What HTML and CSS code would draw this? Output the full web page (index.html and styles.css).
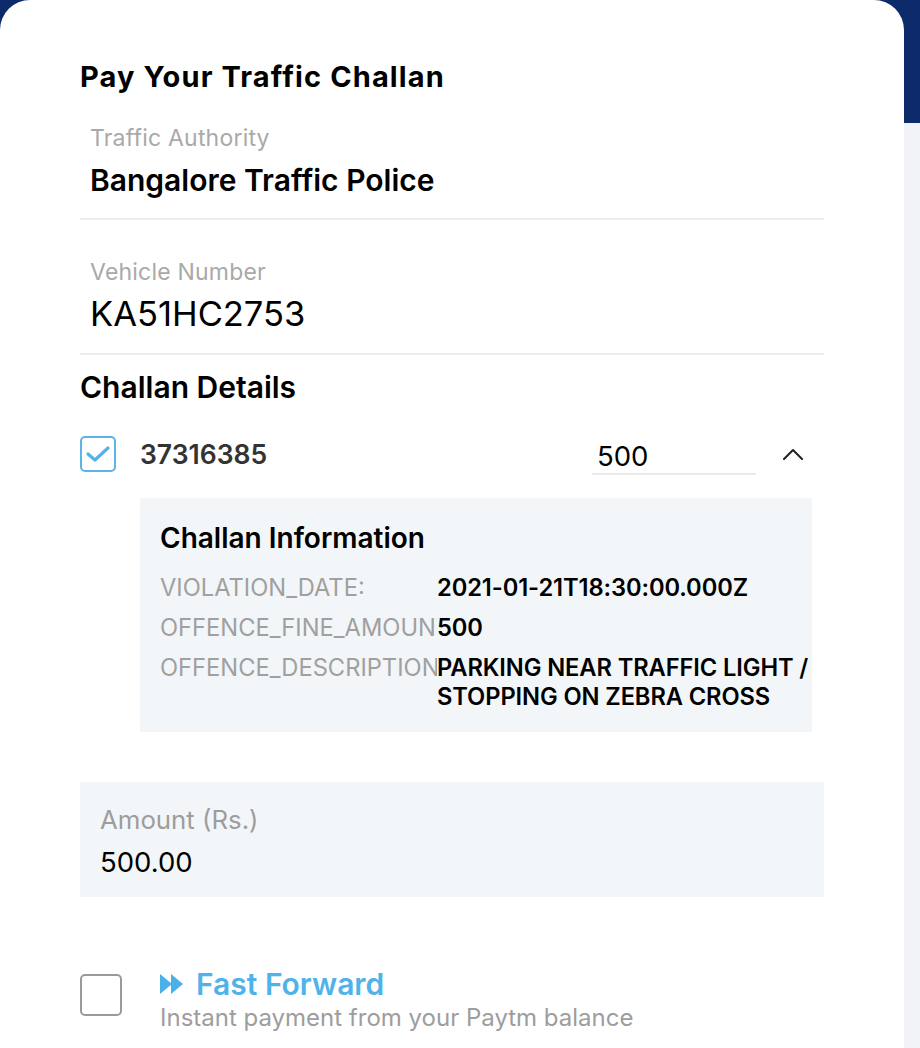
FILE: index.html
```html
<!DOCTYPE html>
<html lang="en">
<head>
  <meta charset="UTF-8">
  <title>Pay Your Traffic Challan</title>
  <link rel="stylesheet" href="styles.css">
</head>
<body>

<div class="card">
  <h1 class="title">Pay Your Traffic Challan</h1>

  <div class="field first">
    <div class="field-label">Traffic Authority</div>
    <div class="field-value bold">Bangalore Traffic Police</div>
  </div>

  <div class="field">
    <div class="field-label">Vehicle Number</div>
    <div class="field-value big">KA51HC2753</div>
  </div>

  <h2 class="section">Challan Details</h2>

  <div class="challan-row">
    <span class="check checked">
      <svg width="26" height="20" viewBox="0 0 26 20"><polyline points="3,10 10,16 23,4" fill="none" stroke="#55b2e6" stroke-width="3.2" stroke-linecap="round" stroke-linejoin="round"/></svg>
    </span>
    <span class="challan-no">37316385</span>
    <span class="challan-amt">500</span>
    <span class="chevron">
      <svg width="22" height="12" viewBox="0 0 22 12"><polyline points="2,11 11,2 20,11" fill="none" stroke="#222" stroke-width="2" stroke-linecap="round" stroke-linejoin="round"/></svg>
    </span>
  </div>

  <div class="info">
    <h3 class="info-title">Challan Information</h3>
    <div class="info-grid">
      <div class="info-key">VIOLATION_DATE:</div>
      <div class="info-val">2021-01-21T18:30:00.000Z</div>
      <div class="info-key">OFFENCE_FINE_AMOUNT:</div>
      <div class="info-val">500</div>
      <div class="info-key">OFFENCE_DESCRIPTION:</div>
      <div class="info-val">PARKING NEAR TRAFFIC LIGHT /<br>STOPPING ON ZEBRA CROSS</div>
    </div>
  </div>

  <div class="amount">
    <div class="amount-label">Amount (Rs.)</div>
    <div class="amount-value">500.00</div>
  </div>

  <div class="ff-row">
    <span class="check"></span>
    <div class="ff-text">
      <div class="ff-title">
        <svg width="24" height="20" viewBox="0 0 24 20"><polygon points="0,0 12,10 0,20" fill="#4bafe8"/><polygon points="11,0 23,10 11,20" fill="#4bafe8"/></svg>
        Fast Forward
      </div>
      <div class="ff-sub">Instant payment from your Paytm balance</div>
    </div>
  </div>
</div>

</body>
</html>
```

FILE: styles.css
```css
body {
  margin: 0;
  padding: 0;
  font-family: 'Inter', 'Liberation Sans', sans-serif;
  background: linear-gradient(#0d2a6a 0, #0d2a6a 123px, #f2f3f8 123px);
  min-height: 1048px;
  overflow: hidden;
}
.card {
  width: 904px;
  min-height: 1100px;
  box-sizing: border-box;
  background: #fff;
  border-radius: 30px 30px 0 0;
  padding: 60px 80px 0 80px;
}
.title {
  margin: 0;
  font-size: 29px;
  line-height: 34px;
  font-weight: 700;
  color: #000;
  letter-spacing: 1.1px;
}
.field {
  padding: 40px 10px 20px 10px;
  border-bottom: 2px solid #ececec;
}
.field.first {
  padding-top: 32px;
}
.field-label {
  font-size: 23px;
  line-height: 24px;
  color: #a9a9a9;
  letter-spacing: 0.2px;
}
.field-value {
  margin-top: 12px;
  color: #000;
}
.field-value.bold {
  margin-top: 12px;
  font-size: 30px;
  line-height: 36px;
  font-weight: 600;
}
.field-value.big {
  margin-top: 11px;
  font-size: 34.5px;
  line-height: 38px;
}
.section {
  margin: 16px 0 0 0;
  font-size: 30px;
  line-height: 32px;
  font-weight: 600;
  color: #000;
}
.challan-row {
  display: flex;
  align-items: center;
  margin-top: 32px;
  height: 38px;
}
.check {
  width: 36px;
  height: 36px;
  box-sizing: border-box;
  border: 2px solid #9a9a9a;
  border-radius: 5px;
  display: flex;
  align-items: center;
  justify-content: center;
  flex-shrink: 0;
}
.check.checked {
  border-color: #5ab4e5;
}
.challan-no {
  margin-left: 24px;
  font-size: 26.5px;
  font-weight: 600;
  color: #333;
  width: 452px;
}
.challan-amt {
  width: 159px;
  padding-left: 5px;
  font-size: 27.5px;
  line-height: 34px;
  color: #000;
  border-bottom: 2px solid #eaeaea;
  margin-top: 6px;
}
.chevron {
  margin-left: 26px;
  display: flex;
}
.info {
  margin: 25px 12px 0 60px;
  background: #f3f6f8;
  padding: 24px 0 21px 20px;
}
.info-title {
  margin: 0;
  font-size: 28px;
  line-height: 32px;
  font-weight: 600;
  color: #000;
}
.info-grid {
  display: grid;
  grid-template-columns: 277px 1fr;
  row-gap: 11px;
  margin-top: 19px;
  font-size: 23.7px;
  line-height: 29px;
}
.info-key {
  color: #a0a0a0;
  white-space: nowrap;
  overflow: hidden;
}
.info-val {
  font-weight: 600;
  color: #000;
  white-space: nowrap;
  letter-spacing: -0.1px;
}
.amount {
  margin-top: 50px;
  background: #f3f6f8;
  padding: 24px 20px 19px 20px;
}
.amount-label {
  font-size: 25.8px;
  line-height: 28px;
  color: #9d9d9d;
}
.amount-value {
  margin-top: 12px;
  font-size: 27.5px;
  line-height: 32px;
  color: #000;
}
.ff-row {
  display: flex;
  align-items: flex-start;
  margin-top: 70px;
}
.ff-row .check {
  width: 42px;
  height: 42px;
  margin-top: 7px;
}
.ff-text {
  margin-left: 38px;
}
.ff-title {
  display: flex;
  align-items: center;
  gap: 12px;
  font-size: 30px;
  line-height: 34px;
  font-weight: 600;
  color: #4fb3ea;
}
.ff-sub {
  margin-top: 4px;
  font-size: 24px;
  line-height: 26px;
  color: #9d9d9d;
}
```
